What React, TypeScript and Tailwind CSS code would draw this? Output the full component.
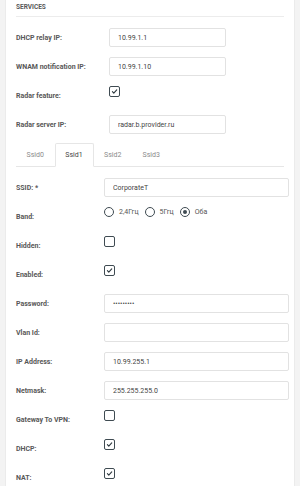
import type { FC, ReactNode } from 'react';

const font = { fontFamily: 'Roboto, "Noto Sans", Arial, sans-serif' };

const Label: FC<{ w: string; children: ReactNode }> = ({ w, children }) => (
    <div className={`${w} shrink-0 pt-[5.5px] text-[7px] leading-[9px] font-bold text-[#585858]`}>{children}</div>
);

const TextBox: FC<{ value: string; wide?: boolean }> = ({ value, wide }) => (
    <input
        readOnly
        value={value}
        className={`${wide ? 'w-[185px]' : 'w-[117px]'} h-[19px] shrink-0 rounded-[2px] border border-[#e2e2e2] bg-white pl-[8px] text-[7px] text-[#444] outline-none`}
    />
);

const Check: FC<{ on?: boolean }> = ({ on }) => (
    <div className="w-[11px] h-[11px] shrink-0 rounded-[2px] border-[1.5px] border-[#3f4b52] bg-white flex items-center justify-center">
        {on && (
            <svg viewBox="0 0 10 10" className="w-[7px] h-[7px]">
                <path d="M2 5.3 L4 7.3 L8.2 2.8" fill="none" stroke="#2f3a40" strokeWidth={1.6} strokeLinecap="round" strokeLinejoin="round" />
            </svg>
        )}
    </div>
);

const Radio: FC<{ on?: boolean; label: string }> = ({ on, label }) => (
    <div className="flex items-center gap-[5px]">
        <div className="w-[10px] h-[10px] rounded-full border-[1.5px] border-[#3f4b52] flex items-center justify-center">
            {on && <div className="w-[4px] h-[4px] rounded-full bg-[#3f4b52]" />}
        </div>
        <span className="text-[7px] leading-[9px] text-[#555]">{label}</span>
    </div>
);

const App: FC = () => {
    const tabs = ['Ssid0', 'Ssid1', 'Ssid2', 'Ssid3'];

    return (
        <div className="min-h-screen bg-[#f3f3f3] px-[5px]" style={font}>
            <div className="min-h-[486px] bg-white border-x border-[#ebebeb] px-[10px]">
                {/* header */}
                <div className="h-[17px] border-b border-[#ececec] pt-[3px]">
                    <div className="text-[6.5px] leading-[9px] font-bold text-[#585858] uppercase">Services</div>
                </div>

                {/* services */}
                <div className="mt-[11px] flex flex-col gap-[10px]">
                    <div className="flex h-[19px] items-start">
                        <Label w="w-[93px]">DHCP relay IP:</Label>
                        <TextBox value="10.99.1.1" />
                    </div>
                    <div className="flex h-[19px] items-start">
                        <Label w="w-[93px]">WNAM notification IP:</Label>
                        <TextBox value="10.99.1.10" />
                    </div>
                    <div className="flex h-[19px] items-start">
                        <Label w="w-[93px]">Radar feature:</Label>
                        <Check on />
                    </div>
                    <div className="flex h-[19px] items-start">
                        <Label w="w-[93px]">Radar server IP:</Label>
                        <TextBox value="radar.b.provider.ru" />
                    </div>
                </div>

                {/* tabs */}
                <div className="mt-[9px] flex h-[24px] border-b border-[#e6e6e6]">
                    {tabs.map((t) => (
                        <div
                            key={t}
                            className={
                                t === 'Ssid1'
                                    ? 'w-[39px] -mb-px rounded-t-[2px] border border-[#e6e6e6] border-b-white bg-white text-center text-[7px] leading-[22px] text-[#444]'
                                    : 'w-[38.5px] border border-transparent text-center text-[7px] leading-[22px] text-[#8a8a8a]'
                            }
                        >
                            {t}
                        </div>
                    ))}
                </div>

                {/* ssid form */}
                <div className="mt-[11px] flex flex-col gap-[10px]">
                    <div className="flex h-[19px] items-start">
                        <Label w="w-[88px]">SSID: *</Label>
                        <TextBox value="CorporateT" wide />
                    </div>
                    <div className="flex h-[19px] items-start">
                        <Label w="w-[88px]">Band:</Label>
                        <div className="flex gap-[6px]">
                            <Radio label="2,4Ггц" />
                            <Radio label="5Ггц" />
                            <Radio label="Оба" on />
                        </div>
                    </div>
                    <div className="flex h-[19px] items-start">
                        <Label w="w-[88px]">Hidden:</Label>
                        <Check />
                    </div>
                    <div className="flex h-[19px] items-start">
                        <Label w="w-[88px]">Enabled:</Label>
                        <Check on />
                    </div>
                    <div className="flex h-[19px] items-start">
                        <Label w="w-[88px]">Password:</Label>
                        <TextBox value="•••••••••" wide />
                    </div>
                    <div className="flex h-[19px] items-start">
                        <Label w="w-[88px]">Vlan Id:</Label>
                        <TextBox value="" wide />
                    </div>
                    <div className="flex h-[19px] items-start">
                        <Label w="w-[88px]">IP Address:</Label>
                        <TextBox value="10.99.255.1" wide />
                    </div>
                    <div className="flex h-[19px] items-start">
                        <Label w="w-[88px]">Netmask:</Label>
                        <TextBox value="255.255.255.0" wide />
                    </div>
                    <div className="flex h-[19px] items-start">
                        <Label w="w-[88px]">Gateway To VPN:</Label>
                        <Check />
                    </div>
                    <div className="flex h-[19px] items-start">
                        <Label w="w-[88px]">DHCP:</Label>
                        <Check on />
                    </div>
                    <div className="flex h-[19px] items-start">
                        <Label w="w-[88px]">NAT:</Label>
                        <Check on />
                    </div>
                </div>
            </div>
        </div>
    );
};

export default App;
